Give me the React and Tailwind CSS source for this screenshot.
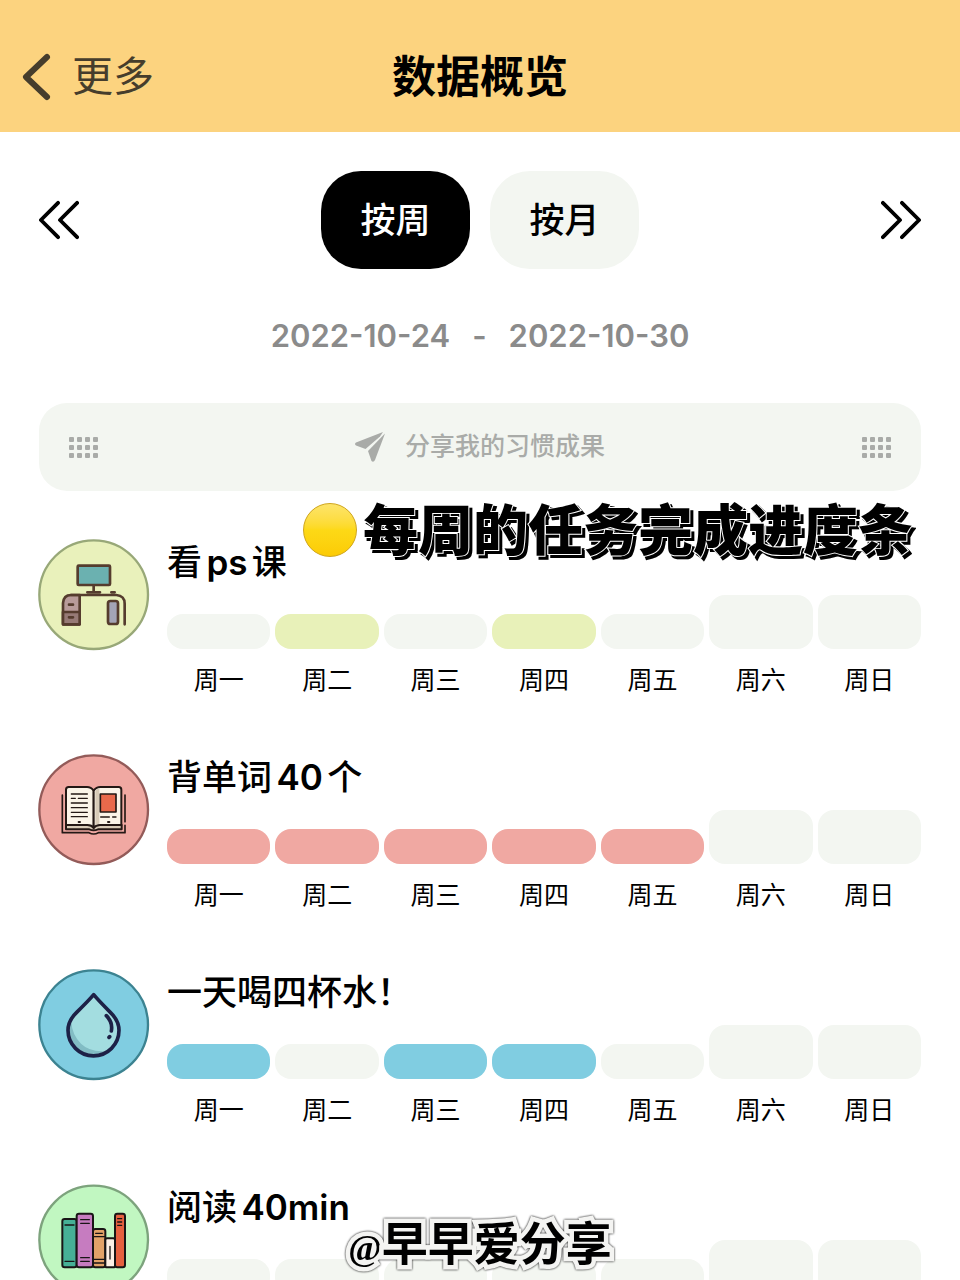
import React, { useState } from "react";
import { clsx } from "clsx";

const days = ["周一", "周二", "周三", "周四", "周五", "周六", "周日"];

const DeskIcon = () => (
  <svg viewBox="27 30 330 330" className="w-full overflow-visible" fill="none" strokeLinecap="round" strokeLinejoin="round">
    <circle cx="191" cy="194" r="163" fill="#e9f1bb" stroke="#98a878" strokeWidth="7" />
    <g stroke="#553c2e" strokeWidth="8">
      <rect x="143" y="107" width="97" height="58" rx="3" fill="#6bb1b0" />
      <path d="M191 167v18M172 187h38M244 187h10" />
      <path d="M149 195v88H99v-64q2-24 24-24z" fill="#b89b9a" />
      <path d="M99 246h50v37H99z" fill="#967a76" />
      <path d="M123 195h136q25 2 25 26v62" />
      <path d="M117 224h12M117 262h12" />
      <rect x="234" y="213" width="30" height="69" rx="7" fill="#a3a4b6" />
    </g>
  </svg>
);

const BookIcon = () => (
  <svg viewBox="27 30 330 330" className="w-full overflow-visible" fill="none" strokeLinecap="round" strokeLinejoin="round">
    <circle cx="191" cy="194" r="163" fill="#f0a8a2" stroke="#935b59" strokeWidth="7" />
    <g stroke="#241815" strokeWidth="6">
      <path d="M97 150v113h80q14 8 28 0h80v-22M285 150v80" strokeWidth="5" />
      <path d="M108 240v13h70q13 6 26 0h71v-13z" fill="#d8cbb8" />
      <path d="M191 137q-8-11-20-11h-55q-8 0-8 8v106h64q13 0 19 9z" fill="#fbf4e8" />
      <path d="M191 137q8-11 20-11h55q8 0 8 8v106h-64q-13 0-19 9z" fill="#fbf4e8" />
      <path d="M196 139q4-7 12-9v106q-8 1-12 5z" fill="#d8cbb8" stroke="none" />
      <rect x="211" y="147" width="47" height="54" fill="#e9694b" strokeWidth="5" />
      <path d="M124 147h48M124 160h12M145 160h27M124 174h48M124 188h48M124 202h48M124 215h48M212 216h26M248 216h10" strokeWidth="4" />
      <path d="M146 231h4M234 231h4" />
    </g>
  </svg>
);

const WaterIcon = () => (
  <svg viewBox="27 30 330 330" className="w-full overflow-visible" fill="none" strokeLinecap="round" strokeLinejoin="round">
    <circle cx="191" cy="194" r="163" fill="#80cde1" stroke="#3c8391" strokeWidth="7" />
    <path d="M191 104q-15 18-51 53-26 25-26 54a76 76 0 0 0 153 0q0-29-26-54-35-35-50-53z" fill="#a3dde0" />
    <path d="M124 186q-10 12-8 34a74 74 0 0 0 110 53q-45 4-73-22-27-27-29-65z" fill="#82bcc4" />
    <path
      d="M191 104q-15 18-51 53-26 25-26 54a76 76 0 0 0 153 0q0-29-26-54-35-35-50-53z"
      stroke="#1d2147"
      strokeWidth="11"
    />
    <path d="M229 167q20 20 15 46M239 230l-2 2" stroke="#1d2147" strokeWidth="11" />
  </svg>
);

const ShelfIcon = () => (
  <svg viewBox="27 45 330 330" className="w-full overflow-visible" fill="none" strokeLinecap="round" strokeLinejoin="round">
    <circle cx="191" cy="210" r="163" fill="#c1f7c1" stroke="#7da37d" strokeWidth="7" />
    <g stroke="#191516" strokeWidth="6">
      <rect x="97" y="147" width="43" height="145" rx="7" fill="#46b096" />
      <rect x="140" y="131" width="49" height="161" rx="7" fill="#c67cc0" />
      <rect x="189" y="177" width="37" height="115" rx="7" fill="#e2a268" />
      <rect x="226" y="205" width="29" height="87" rx="5" fill="#fdf0e6" />
      <rect x="255" y="131" width="30" height="161" rx="7" fill="#e5603f" />
      <path
        d="M105 165h27M105 274h27M152 149h26M152 160h26M152 263h26M152 274h26M197 190h20M191 200h33M191 268h33M191 279h33M240 229v38M263 146h12M263 156h12M263 166h12"
        strokeWidth="4"
      />
    </g>
  </svg>
);

const habits = [
  { name: "看ps课", Icon: DeskIcon, color: "bg-[#e8f1b9]", done: [1, 3] },
  { name: "背单词40个", Icon: BookIcon, color: "bg-[#f0a8a2]", done: [0, 1, 2, 3, 4] },
  { name: "一天喝四杯水！", Icon: WaterIcon, color: "bg-[#80cde1]", done: [0, 2, 3] },
  { name: "阅读40min", Icon: ShelfIcon, color: "bg-[#c1f7c1]", done: [] },
];

const DoubleArrow = ({ className }) => (
  <svg
    viewBox="0 0 42 42"
    className={clsx("w-10", className)}
    fill="none"
    stroke="#000"
    strokeWidth="4"
    strokeLinecap="round"
    strokeLinejoin="round"
  >
    <path d="M20 3L2 21l18 18M40 3L22 21l18 18" />
  </svg>
);

const Dots = () => (
  <div className="grid grid-cols-4 gap-[3px]">
    {Array.from({ length: 12 }).map((_, i) => (
      <span key={i} className="w-[5px] h-[5px] rounded-[1px] bg-[#a9aba8]"></span>
    ))}
  </div>
);

const Habit = ({ name, Icon, color, done }) => (
  <section className="flex items-start gap-[18px]">
    <div className="w-[110px] shrink-0">
      <Icon />
    </div>
    <div className="flex-1">
      {/* latin letters and digits are a step heavier */}
      <h2 className="text-[35px] leading-[44px] font-medium [text-autospace:normal]">
        {name.split(/([a-z0-9]+)/).map((part, i) =>
          i % 2 ? (
            <span key={i} className="font-semibold">
              {part}
            </span>
          ) : (
            part
          )
        )}
      </h2>
      <div className="grid grid-cols-7 items-end gap-[5px] mt-[11px]">
        {days.map((day, i) => (
          <div
            key={day}
            className={clsx(
              "rounded-2xl",
              i > 4 ? "h-[54px]" : "h-[35px]",
              done.includes(i) ? color : "bg-[#f3f6f1]"
            )}
          ></div>
        ))}
      </div>
      <div className="grid grid-cols-7 gap-[5px] mt-[13px] text-center text-[25px] leading-[36px]">
        {days.map((day) => (
          <span key={day}>{day}</span>
        ))}
      </div>
    </div>
  </section>
);

const App = () => {
  const [mode, setMode] = useState("week");

  const tabClass = (active) =>
    clsx(
      "w-[149px] h-[98px] rounded-[40px] text-[35px] font-medium cursor-pointer",
      active ? "bg-black text-white" : "bg-[#f3f6f1] text-black"
    );

  return (
    <div className="min-h-screen bg-white text-black font-['Inter','Noto_Sans_CJK_SC',sans-serif]">
      {/* Header */}
      <header className="grid grid-cols-3 items-center h-[132px] pt-[22px] px-5 bg-[#fcd37f]">
        <button className="flex items-center gap-5 text-[41px] text-[#463d2c] cursor-pointer">
          <svg viewBox="0 0 32 52" className="w-8" fill="none" stroke="currentColor" strokeWidth="6" strokeLinecap="round" strokeLinejoin="round">
            <path d="M27 6L6 26l21 20" />
          </svg>
          更多
        </button>
        <h1 className="text-center text-[44px] font-bold">数据概览</h1>
      </header>

      <main className="px-[39px] py-[39px]">
        {/* Week / month switch */}
        <div className="flex items-center justify-between">
          <button aria-label="上一周" className="cursor-pointer">
            <DoubleArrow />
          </button>
          <div className="flex gap-5">
            <button className={tabClass(mode === "week")} onClick={() => setMode("week")}>
              按周
            </button>
            <button className={tabClass(mode === "month")} onClick={() => setMode("month")}>
              按月
            </button>
          </div>
          <button aria-label="下一周" className="cursor-pointer">
            <DoubleArrow className="rotate-180" />
          </button>
        </div>

        <div className="flex justify-center gap-[22px] mt-[47px] text-[31px] leading-[40px] font-semibold text-[#8b8b8b]">
          <span>2022-10-24</span>
          <span>-</span>
          <span>2022-10-30</span>
        </div>

        {/* Share */}
        <button className="flex items-center justify-between w-full h-[88px] mt-[47px] px-[30px] rounded-[28px] bg-[#f3f6f1] cursor-pointer">
          <Dots />
          <span className="flex items-center gap-5 text-[25px] font-medium text-[#a9aba8]">
            <svg viewBox="0 0 30 30" className="w-[30px]" fill="currentColor">
              <path d="M28 0L1 10.500q-2 1.500 0 3l9.500 3.500L25 4.500z" />
              <path d="M30 1.500L20 28q-1.500 3-3.500 1L13 19 28.500 3z" />
            </svg>
            分享我的习惯成果
          </span>
          <Dots />
        </button>

        {/* Habits */}
        <div className="relative flex flex-col gap-[57px] mt-[49px]">
          {habits.map((habit) => (
            <Habit key={habit.name} {...habit} />
          ))}

          {/* Sticker */}
          <div className="absolute right-2 -top-[50px] flex items-center gap-[6px] whitespace-nowrap">
            <span className="w-[54px] h-[54px] rounded-full border border-[#cfa51c] bg-linear-to-b from-[#fde468] via-[#fdd916] to-[#fccb05]"></span>
            <span className="text-[55px] leading-[80px] font-black [-webkit-text-stroke:2px_white] [paint-order:stroke_fill] [filter:drop-shadow(3px_3px_0_black)]">
              每周的任务完成进度条
            </span>
          </div>
        </div>
      </main>

      {/* Author */}
      <div className="fixed inset-x-0 bottom-0 text-center text-[46px] leading-[64px] font-bold [-webkit-text-stroke:9px_#f4f4f2] [paint-order:stroke_fill] [filter:drop-shadow(0_0_1px_black)]">
        <span className="text-[36px] font-['Liberation_Serif',serif]">@</span>
        早早爱分享
      </div>
    </div>
  );
};

export default App;
